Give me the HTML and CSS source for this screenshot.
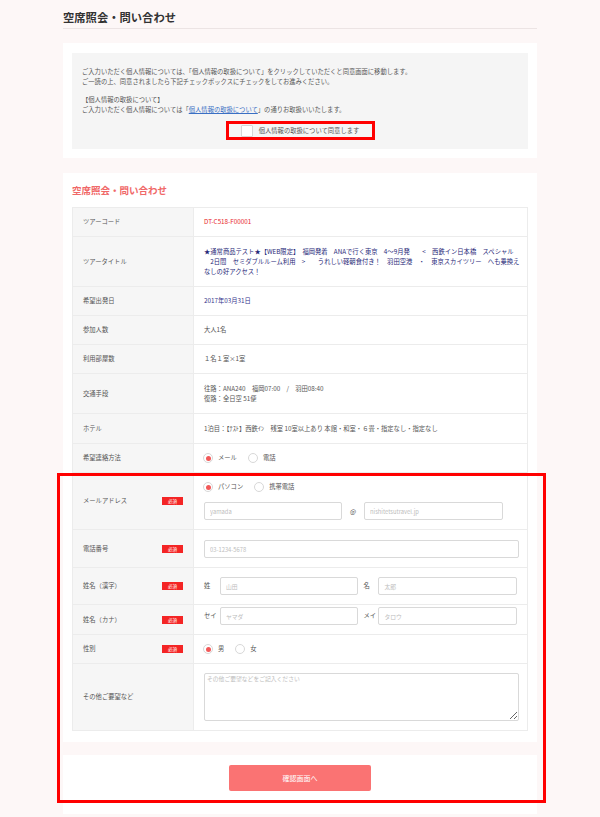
FILE: index.html
```html
<!DOCTYPE html>
<html lang="ja">
<head>
<meta charset="utf-8">
<title>空席照会・問い合わせ</title>
<link rel="stylesheet" href="styles.css">
</head>
<body>
<div class="page">
  <h1 class="page-title">空席照会・問い合わせ</h1>

  <section class="card">
    <div class="notice">
      <p>ご入力いただく個人情報については、「個人情報の取扱について」をクリックしていただくと同意画面に移動します。<br>ご一読の上、同意されましたら下記チェックボックスにチェックをしてお進みください。</p>
      <p>【個人情報の取扱について】<br>ご入力いただく個人情報については「<a href="#" class="link">個人情報の取扱について</a>」の通りお取扱いいたします。</p>
      <div class="agree-row">
        <label class="agree">
          <span class="checkbox"></span>
          <span>個人情報の取扱について同意します</span>
          <span class="mark mark-small"></span>
        </label>
      </div>
    </div>
  </section>

  <section class="card card-form">
    <h2 class="form-title">空席照会・問い合わせ</h2>
    <table class="form-table">
      <colgroup><col class="col-label"><col></colgroup>
      <tr><th>ツアーコード</th><td class="code">DT-C518-F00001</td></tr>
      <tr class="row-tall"><th>ツアータイトル</th><td class="tour">★通常商品テスト★【WEB限定】　福岡発着　ANAで行く東京　4～9月発　　<　西鉄イン日本橋　スペシャル<br>　2日間　セミダブルルーム利用　>　　うれしい軽朝食付き！　羽田空港　・　東京スカイツリー　へも乗換え<br>なしの好アクセス！</td></tr>
      <tr><th>希望出発日</th><td class="date">2017年03月31日</td></tr>
      <tr><th>参加人数</th><td>大人1名</td></tr>
      <tr><th>利用部屋数</th><td>１名１室×1室</td></tr>
      <tr class="row-two"><th>交通手段</th><td>往路：ANA240　福岡07:00　/　羽田08:40<br>復路：全日空 51便</td></tr>
      <tr class="row-hotel"><th>ホテル</th><td>1泊目：【ﾃｽﾄ】西鉄ｲﾝ　残室 10室以上あり 本館・和室・６畳・指定なし・指定なし</td></tr>
      <tr><th>希望連絡方法</th><td><div class="radios"><span class="radio checked"></span><span class="radio-text">メール</span><span class="radio"></span><span class="radio-text">電話</span></div></td></tr>
      <tr class="row-mail"><th><div class="req-label"><span>メールアドレス</span><span class="badge">必須</span></div></th>
        <td>
          <div class="radios"><span class="radio checked"></span><span class="radio-text">パソコン</span><span class="radio"></span><span class="radio-text">携帯電話</span></div>
          <div class="field-line mail-line"><input class="input w138" placeholder="yamada"><span class="at">@</span><input class="input w139" placeholder="nishitetsutravel.jp"></div>
        </td></tr>
      <tr class="row-phone"><th><div class="req-label"><span>電話番号</span><span class="badge">必須</span></div></th>
        <td><input class="input w315" placeholder="03-1234-5678"></td></tr>
      <tr class="row-kanji"><th><div class="req-label"><span>姓名（漢字）</span><span class="badge">必須</span></div></th>
        <td><div class="field-line"><span class="pre">姓</span><input class="input w138" placeholder="山田"><span class="pre pre2">名</span><input class="input w139" placeholder="太郎"></div></td></tr>
      <tr class="row-kana"><th><div class="req-label"><span>姓名（カナ）</span><span class="badge">必須</span></div></th>
        <td><div class="field-line"><span class="pre">セイ</span><input class="input w138" placeholder="ヤマダ"><span class="pre pre2">メイ</span><input class="input w139" placeholder="タロウ"></div></td></tr>
      <tr><th><div class="req-label"><span>性別</span><span class="badge">必須</span></div></th>
        <td><div class="radios"><span class="radio checked"></span><span class="radio-text">男</span><span class="radio"></span><span class="radio-text">女</span></div></td></tr>
      <tr class="row-note"><th>その他ご要望など</th><td><textarea class="textarea" placeholder="その他ご要望などをご記入ください"></textarea></td></tr>
    </table>
  </section>

  <section class="card card-button">
    <button class="submit" type="button">確認画面へ</button>
  </section>
</div>
<div class="mark mark-large"></div>
</body>
</html>
```

FILE: styles.css
```css
html, body {
  margin: 0;
  padding: 0;
}
body {
  background: #fdf7f7;
  font-family: "Noto Sans CJK JP", "Noto Sans", sans-serif;
  color: #555;
  font-size: 6.3px;
  line-height: 10px;
  position: relative;
  min-height: 817px;
}
.page {
  width: 474px;
  margin: 0 auto;
  padding-bottom: 5px;
}
.page-title {
  margin: 0;
  padding: 9px 0 3px;
  font-size: 11.3px;
  line-height: 16px;
  font-weight: bold;
  color: #333;
  border-bottom: 1px solid #ece4e4;
}
.card {
  background: #fff;
  margin-top: 14px;
  padding: 10px 9px 9px;
}
.notice {
  background: #f5f5f5;
  padding: 14px 10px 13px;
}
.notice p {
  margin: 0 0 8px;
}
.link {
  color: #3a6fc4;
  text-decoration: underline;
}
.agree-row {
  display: flex;
  justify-content: center;
  margin-top: 10px;
}
.agree {
  position: relative;
  display: flex;
  align-items: center;
  gap: 6px;
  height: 11px;
}
.checkbox {
  width: 10px;
  height: 10px;
  background: #fff;
  border: 1px solid #d6d6d6;
  border-radius: 1px;
}
.mark {
  position: absolute;
  border: 3px solid #ff0000;
  box-sizing: border-box;
  pointer-events: none;
}
.mark-small {
  left: -15px;
  right: -16px;
  top: -4px;
  bottom: -4px;
}
.mark-large {
  left: 57px;
  top: 473px;
  width: 489px;
  height: 330px;
}
.card-form {
  margin-top: 15px;
  padding: 10px 9px 11px;
}
.form-title {
  margin: 0 0 10px;
  font-size: 9.5px;
  line-height: 14px;
  font-weight: bold;
  color: #f06868;
}
.form-table {
  width: 456px;
  border-collapse: collapse;
  table-layout: fixed;
}
.col-label {
  width: 121px;
}
.form-table th,
.form-table td {
  border: 1px solid #ececec;
  padding: 9px 10px;
  text-align: left;
  vertical-align: middle;
  font-weight: normal;
}
.form-table th {
  background: #f6f6f6;
}
.form-table td {
  background: #fff;
}
.row-tall td, .row-tall th { padding-top: 10px; }
.row-two td, .row-two th { padding-top: 10px; }
.row-hotel td, .row-hotel th { padding-top: 10px; }
.row-phone td { padding-top: 10px; }
.row-kana td { padding-top: 2px; }
.code {
  color: #e8262b;
  font-weight: bold;
}
.tour {
  color: #1f2878;
  font-weight: bold;
  white-space: nowrap;
}
.date {
  color: #34348c;
}
.req-label {
  display: flex;
  align-items: center;
  justify-content: space-between;
}
.badge {
  width: 21px;
  height: 8px;
  background: #f42525;
  color: #fff;
  font-size: 4.5px;
  line-height: 8px;
  text-align: center;
}
.radios {
  display: flex;
  align-items: center;
  height: 10px;
}
.radio {
  width: 10px;
  height: 10px;
  box-sizing: border-box;
  border: 1px solid #d8d8d8;
  border-radius: 50%;
  background: #fff;
  position: relative;
  margin-left: -1px;
}
.radio.checked::after {
  content: "";
  position: absolute;
  left: 1.5px;
  top: 1.5px;
  width: 5px;
  height: 5px;
  border-radius: 50%;
  background: #f25858;
}
.radio-text {
  margin-left: 5px;
  margin-right: 12px;
}
.field-line {
  display: flex;
  align-items: center;
}
.mail-line {
  margin-top: 10px;
}
.input {
  box-sizing: border-box;
  height: 18px;
  border: 1px solid #d9d9d9;
  border-radius: 2px;
  padding: 0 5px;
  font-family: inherit;
  font-size: 5.8px;
  color: #555;
  background: #fff;
  outline: none;
  margin: 0;
}
.input::placeholder,
.textarea::placeholder {
  color: #bdbdbd;
}
.w138 { width: 138px; }
.w139 { width: 139px; }
.w315 { width: 315px; display: block; }
.at {
  width: 22px;
  text-align: center;
  font-size: 6.5px;
}
.pre {
  width: 16px;
}
.pre2 {
  margin-left: 6px;
  width: 15px;
}
.textarea {
  display: block;
  box-sizing: border-box;
  width: 315px;
  height: 48px;
  border: 1px solid #d9d9d9;
  border-radius: 2px;
  padding: 1px 2px;
  font-family: inherit;
  font-size: 5.8px;
  line-height: 8px;
  margin: 0;
}
.card-button {
  margin-top: 13px;
  padding: 10px 0 23px;
  display: flex;
  justify-content: center;
}
.submit {
  width: 142px;
  height: 26px;
  border: 0;
  border-radius: 2px;
  background: #fa7373;
  color: #fff;
  font-family: inherit;
  font-size: 7px;
  cursor: pointer;
}
```
